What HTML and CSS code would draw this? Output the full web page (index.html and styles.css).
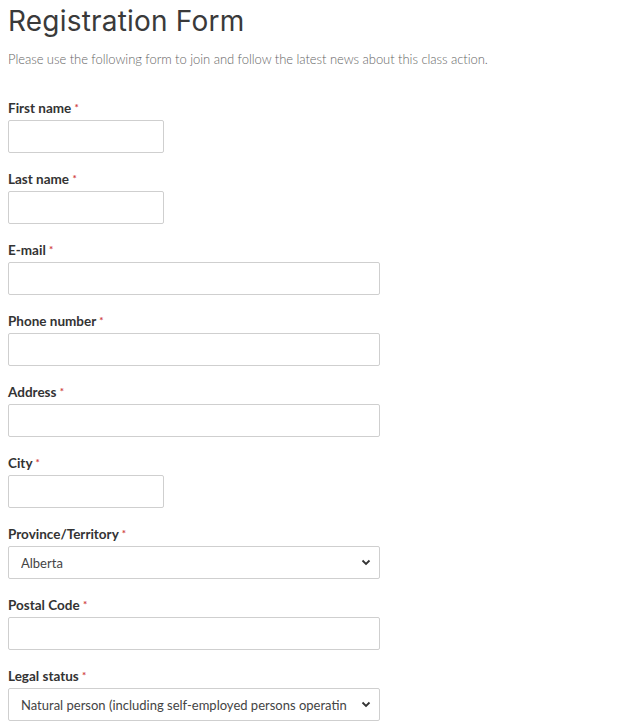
FILE: index.html
```html
<!DOCTYPE html>
<html lang="en">
<head>
<meta charset="utf-8">
<title>Registration Form</title>
<link rel="stylesheet" href="styles.css">
</head>
<body>
<h1 class="title">Registration Form</h1>
<p class="intro">Please use the following form to join and follow the latest news about this class action.</p>
<form class="form">
  <div class="field">
    <label class="label">First name <span class="req">*</span></label>
    <input class="input short" type="text">
  </div>
  <div class="field">
    <label class="label">Last name <span class="req">*</span></label>
    <input class="input short" type="text">
  </div>
  <div class="field">
    <label class="label">E-mail <span class="req">*</span></label>
    <input class="input wide" type="text">
  </div>
  <div class="field">
    <label class="label">Phone number <span class="req">*</span></label>
    <input class="input wide" type="text">
  </div>
  <div class="field">
    <label class="label">Address <span class="req">*</span></label>
    <input class="input wide" type="text">
  </div>
  <div class="field">
    <label class="label">City <span class="req">*</span></label>
    <input class="input short" type="text">
  </div>
  <div class="field">
    <label class="label">Province/Territory <span class="req">*</span></label>
    <div class="select wide"><span class="select-text">Alberta</span><svg class="chev" width="10" height="7" viewBox="0 0 10 7"><path d="M1.5 1.5 L5 5 L8.5 1.5" fill="none" stroke="#333" stroke-width="1.8"/></svg></div>
  </div>
  <div class="field">
    <label class="label">Postal Code <span class="req">*</span></label>
    <input class="input wide" type="text">
  </div>
  <div class="field">
    <label class="label">Legal status <span class="req">*</span></label>
    <div class="select wide"><span class="select-text">Natural person (including self-employed persons operatin</span><svg class="chev" width="10" height="7" viewBox="0 0 10 7"><path d="M1.5 1.5 L5 5 L8.5 1.5" fill="none" stroke="#333" stroke-width="1.8"/></svg></div>
  </div>
</form>
</body>
</html>
```
FILE: styles.css
```css
html, body { background: #fff; }
body {
  margin: 0;
  padding: 0 8px;
  font-family: Lato, "Liberation Sans", sans-serif;
  color: #333;
}
.title {
  margin: 0;
  padding-top: 3px;
  font-family: Inter, "DejaVu Sans", sans-serif;
  font-weight: 400;
  font-size: 28px;
  line-height: 36px;
  color: #3a3a3a;
  letter-spacing: 0.2px;
}
.intro {
  margin: 12px 0 0;
  font-size: 13px;
  line-height: 16px;
  color: #666;
  font-weight: 300;
  letter-spacing: -0.05px;
}
.form {
  display: flex;
  flex-direction: column;
  gap: 18px;
  margin-top: 33px;
}
.field {
  display: flex;
  flex-direction: column;
  gap: 4px;
}
.label {
  display: block;
  height: 16px;
  font-size: 13.5px;
  font-weight: 700;
  line-height: 16px;
  color: #333;
}
.req { color: #d0413f; font-weight: 700; font-size: 10px; line-height: 1; vertical-align: top; position: relative; top: 2px; }
.input, .select {
  box-sizing: border-box;
  height: 33px;
  border: 1px solid #cfcfcf;
  border-radius: 2px;
  background: #fff;
  margin: 0;
  padding: 0;
}
.short { width: 156px; }
.wide { width: 372px; }
.select {
  display: flex;
  align-items: center;
  justify-content: space-between;
  padding: 0 8px 0 12px;
}
.select-text {
  font-family: Lato, "Open Sans", sans-serif;
  font-size: 13px;
  color: #444;
  white-space: nowrap;
  overflow: hidden;
}
.chev { flex: none; margin-left: 8px; }
```
